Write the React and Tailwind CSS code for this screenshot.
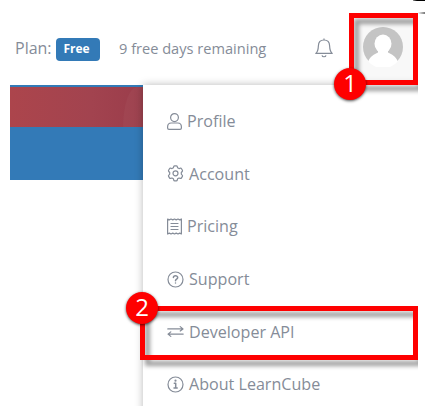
import React from "react";

const Icon = ({ width = 16, children }) => (
  <svg
    width={width}
    height="17"
    viewBox={`0 0 ${width} 17`}
    fill="none"
    stroke="currentColor"
    strokeWidth="1.2"
    strokeLinecap="round"
    strokeLinejoin="round"
    className="shrink-0"
  >
    {children}
  </svg>
);

const menuItems = [
  {
    label: "Profile",
    icon: (
      <Icon width={15}>
        <ellipse cx="7.5" cy="4.6" rx="3.9" ry="4" />
        <path d="M4.2 10H10.8C13 10 14.4 11.8 14.4 14V15C14.4 15.8 13.8 16.3 13 16.3H2C1.2 16.3 0.6 15.8 0.6 15V14C0.6 11.8 2 10 4.2 10Z" />
      </Icon>
    ),
  },
  {
    label: "Account",
    icon: (
      <Icon width={17}>
        <path d="M6.7 1.6Q6.9 0.8 7.7 0.8H9.3Q10.1 0.8 10.3 1.6L10.6 2.8 12 3.6 13.3 3.2Q14.1 3 14.5 3.7L15.4 5.2Q15.8 5.9 15.2 6.5L14.3 7.5V9.1L15.2 10.1Q15.8 10.7 15.4 11.4L14.5 12.9Q14.1 13.6 13.3 13.4L12 13 10.6 13.8 10.3 15Q10.1 15.8 9.3 15.8H7.7Q6.9 15.8 6.7 15L6.4 13.8 5 13 3.7 13.4Q2.9 13.6 2.5 12.9L1.6 11.4Q1.2 10.7 1.8 10.1L2.7 9.1V7.5L1.8 6.5Q1.2 5.9 1.6 5.2L2.5 3.7Q2.9 3 3.7 3.2L5 3.6 6.4 2.8Z" />
        <circle cx="8.5" cy="8.3" r="2.5" />
      </Icon>
    ),
  },
  {
    label: "Pricing",
    icon: (
      <Icon width={15}>
        <path d="M0.6 1 2.3 1.9 4 1 5.8 1.9 7.5 1 9.2 1.9 11 1 12.7 1.9 14.4 1V16L12.7 15.1 11 16 9.2 15.1 7.5 16 5.8 15.1 4 16 2.3 15.1 0.6 16Z" />
        <path d="M4 5.5H11M4 8.5H11M4 11.5H11" />
      </Icon>
    ),
  },
  {
    label: "Support",
    icon: (
      <Icon width={17}>
        <circle cx="8.5" cy="8.5" r="7.5" />
        <path d="M6.4 6.6C6.4 4.2 10.7 4.2 10.7 6.6 10.7 8.2 8.5 8.1 8.5 9.7M8.5 11.9v0.2" strokeWidth="1.5" />
      </Icon>
    ),
  },
  {
    label: "Developer API",
    icon: (
      <Icon width={17}>
        <path d="M0.8 5.9H16M13.2 3.6 16 5.9 13.2 8" />
        <path d="M16.2 11.1H1M3.8 8.9 1 11.1 3.8 13.4" />
      </Icon>
    ),
  },
  {
    label: "About LearnCube",
    icon: (
      <Icon width={17}>
        <circle cx="8.5" cy="8.5" r="7.5" />
        <path d="M7.3 7.3H8.7V12M7 12.1H10.2" strokeWidth="1.5" />
        <circle cx="8.5" cy="4.7" r="1.1" fill="currentColor" stroke="none" />
      </Icon>
    ),
  },
];

const Bell = () => (
  <svg width="18" height="20" viewBox="0 0 18 20" fill="none" stroke="currentColor" strokeWidth="1.2" strokeLinejoin="round">
    <path d="M9 0.4V2M0.8 15.4C3 13.6 3.3 10.6 3.4 7.7 3.5 4 5.8 2 9 2S14.5 4 14.6 7.7C14.7 10.6 15 13.6 17.2 15.4Z" />
    <path d="M7 17.3C7.4 19.2 10.6 19.2 11 17.3" />
  </svg>
);

const Avatar = () => (
  <svg width="40" height="40" viewBox="0 0 40 40">
    <circle cx="20" cy="20" r="20" fill="#c4c4c4" />
    <ellipse cx="20" cy="16.8" rx="8.5" ry="9.2" fill="#fff" />
    <path d="M15 22V25.5C11 28 7.5 28.5 5.2 34.6A20 20 0 0 0 34.8 34.6C32.5 28.5 29 28 25 25.5V22Z" fill="#fff" />
  </svg>
);

const Marker = ({ number, className }) => (
  <div
    className={`absolute flex size-8 items-center justify-center rounded-full bg-[#fe0000] pb-[3px] text-[24px] leading-none text-white shadow-[0_1px_3px_rgba(0,0,0,0.7)] ${className}`}
  >
    {number}
  </div>
);

const App = () => (
  <div className="relative h-[406px] w-[425px] overflow-hidden bg-white px-[10px] font-['Open_Sans','Noto_Sans',sans-serif] text-[#858c98]">
    <div className="relative h-full w-[408px] overflow-hidden">
      <header className="flex h-[85px] items-center pt-[10px]">
        <div className="flex w-[339px] items-center pl-[5px]">
          <span className="w-[41px] whitespace-nowrap text-[16px]">Plan:</span>
          <span className="mt-[3px] flex h-[23px] w-[44px] items-center justify-center rounded-[4px] bg-[#337ab7] pr-[3px] text-[12px] font-bold text-white">
            Free
          </span>
          <span className="ml-[19px] mt-[2px] w-[196px] whitespace-nowrap text-[14.6px]">9 free days remaining</span>
          <Bell />
        </div>
        <div className="-mt-[10px] flex h-[85px] flex-1 items-center bg-white pt-[9px]">
          <div className="mt-[4px] flex h-[71px] w-full items-center bg-[#f8f8f8] pb-[4px] pl-[14px]">
            <Avatar />
          </div>
        </div>
      </header>

      <div className="h-[2px] bg-[#337ab7]" />
      <div className="flex h-[40px] bg-linear-to-r from-[#ac454c] from-0% via-[#a2434f] via-20% to-[#9b3d4b] to-32%">
        <div className="ml-[113px] h-full w-[20px] rounded-tl-[14px_40px] bg-white/3" />
      </div>
      <div className="h-[53px] bg-[#337ab7]" />

      {/* Account menu */}
      <nav className="absolute left-[133px] top-[85px] h-[340px] w-[300px] bg-white pl-[24px] pt-[10px] shadow-[0_0_8px_rgba(0,0,0,0.28)]">
        {menuItems.map((item) => (
          <div key={item.label} className="flex h-[52.6px] items-center gap-[5px] text-[16.1px]">
            {item.icon}
            <span className="whitespace-nowrap">{item.label}</span>
          </div>
        ))}
      </nav>

      {/* Step highlights */}
      <div className="absolute left-[339px] top-[13px] h-[72px] w-[69px] border-[5px] border-[#fe0000] drop-shadow-[5px_6px_2px_rgba(0,0,0,0.38)]" />
      <div className="absolute left-[130px] top-[306px] h-[54px] w-[278px] border-[5px] border-[#fe0000] drop-shadow-[5px_6px_2px_rgba(0,0,0,0.38)]" />
      <Marker number="1" className="left-[324px] top-[68px]" />
      <Marker number="2" className="left-[116px] top-[292px]" />
    </div>

    {/* Edge of the neighbouring window */}
    <div className="absolute right-0 top-0 h-px w-[12px] bg-linear-to-r from-[#999] to-black to-40%" />
    <div className="absolute right-0 top-[12px] h-[2px] w-[7px] bg-linear-to-r from-white to-[#777]" />
  </div>
);

export default App;
